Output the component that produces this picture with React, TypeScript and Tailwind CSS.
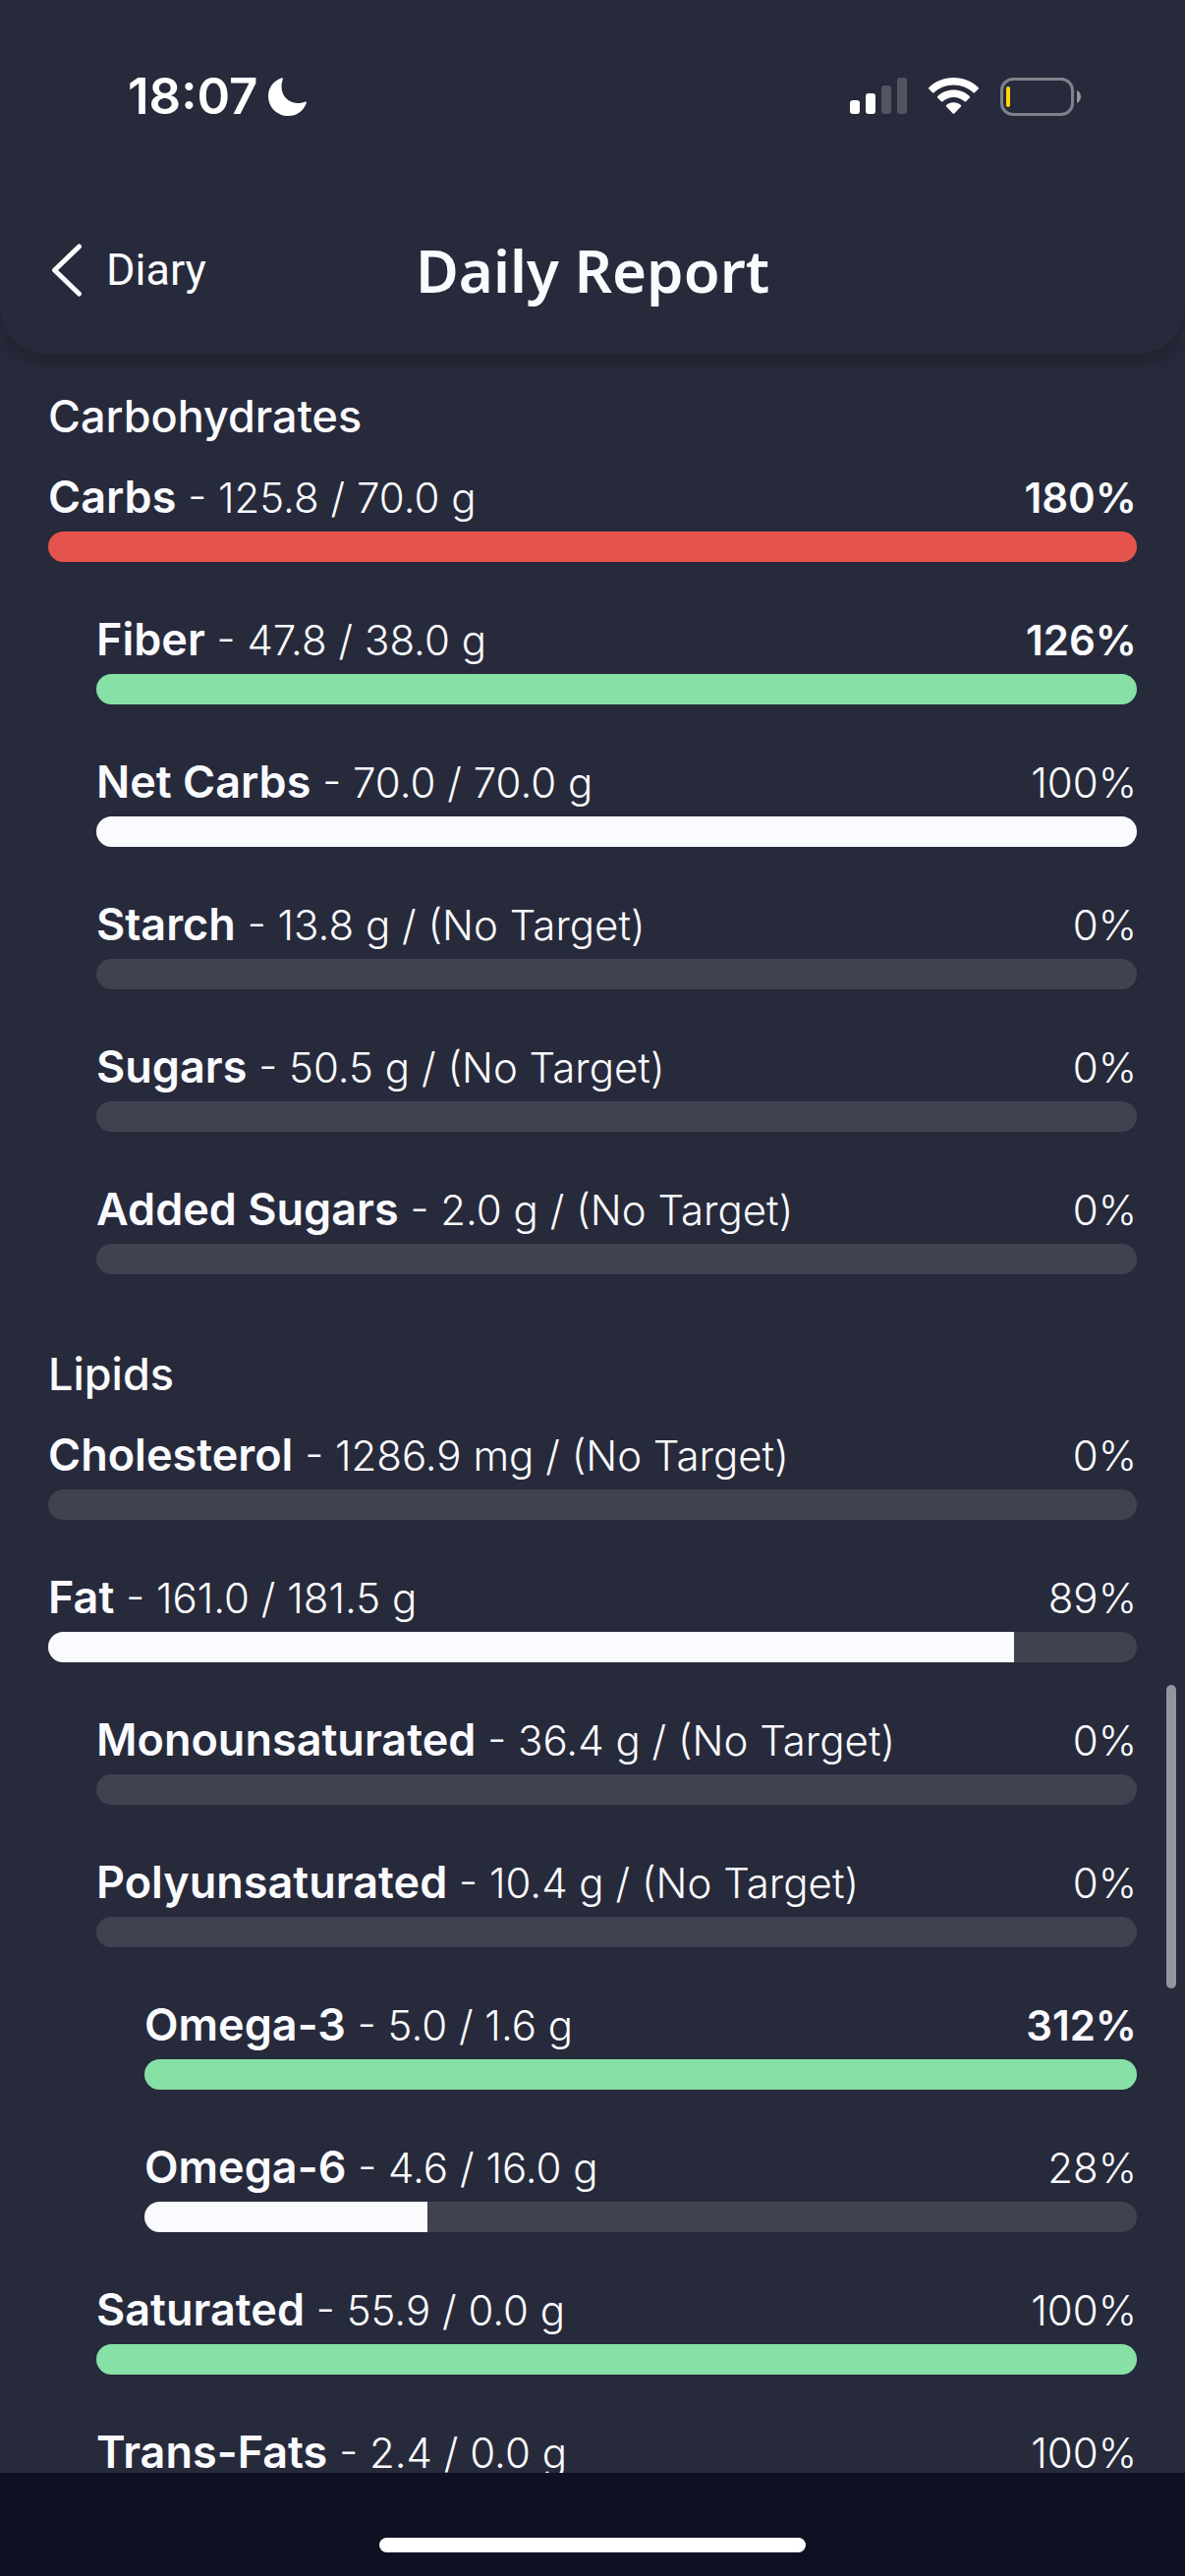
type Tone = 'white' | 'green' | 'red';

type Nutrient = {
  name: string;
  amount: string;
  percent: number;
  fill: number;
  tone: Tone;
  level: 0 | 1 | 2;
};

const toneClass: Record<Tone, string> = {
  white: 'bg-[#fafbff]',
  green: 'bg-[#87e0a5]',
  red: 'bg-[#e5544c]',
};

const levelClass = ['ml-0', 'ml-[49px]', 'ml-[98px]'];

const sections: { title: string; items: Nutrient[] }[] = [
  {
    title: 'Carbohydrates',
    items: [
      { name: 'Carbs', amount: '125.8 / 70.0 g', percent: 180, fill: 100, tone: 'red', level: 0 },
      { name: 'Fiber', amount: '47.8 / 38.0 g', percent: 126, fill: 100, tone: 'green', level: 1 },
      { name: 'Net Carbs', amount: '70.0 / 70.0 g', percent: 100, fill: 100, tone: 'white', level: 1 },
      { name: 'Starch', amount: '13.8 g / (No Target)', percent: 0, fill: 0, tone: 'white', level: 1 },
      { name: 'Sugars', amount: '50.5 g / (No Target)', percent: 0, fill: 0, tone: 'white', level: 1 },
      { name: 'Added Sugars', amount: '2.0 g / (No Target)', percent: 0, fill: 0, tone: 'white', level: 1 },
    ],
  },
  {
    title: 'Lipids',
    items: [
      { name: 'Cholesterol', amount: '1286.9 mg / (No Target)', percent: 0, fill: 0, tone: 'white', level: 0 },
      { name: 'Fat', amount: '161.0 / 181.5 g', percent: 89, fill: 88.7, tone: 'white', level: 0 },
      { name: 'Monounsaturated', amount: '36.4 g / (No Target)', percent: 0, fill: 0, tone: 'white', level: 1 },
      { name: 'Polyunsaturated', amount: '10.4 g / (No Target)', percent: 0, fill: 0, tone: 'white', level: 1 },
      { name: 'Omega-3', amount: '5.0 / 1.6 g', percent: 312, fill: 100, tone: 'green', level: 2 },
      { name: 'Omega-6', amount: '4.6 / 16.0 g', percent: 28, fill: 28.5, tone: 'white', level: 2 },
      { name: 'Saturated', amount: '55.9 / 0.0 g', percent: 100, fill: 100, tone: 'green', level: 1 },
      { name: 'Trans-Fats', amount: '2.4 / 0.0 g', percent: 100, fill: 100, tone: 'red', level: 1 },
    ],
  },
];

function StatusBar() {
  return (
    <div className="flex items-center justify-between pt-[68px] pr-[106px] pl-[130px]">
      <div className="flex items-center gap-[10px]">
        <span className="text-[51px] leading-[60px] font-semibold text-white">18:07</span>
        <svg width="39" height="39" viewBox="0 0 39 39" fill="white" aria-hidden="true">
          <path d="M13.2 0.4C14.3 0 15.2 0.7 14.8 1.9C13.9 4.3 13.4 6.8 13.5 9.6C13.7 18.9 20.3 25.8 29.6 25.9C32.2 26 34.8 25.6 37.1 24.7C38.3 24.3 39.1 25.1 38.7 26.2C35.8 33.900 28.900 39 20.500 39C9 39 0 30 0 18.700C0 10.300 5.300 3.300 13.200 0.400Z" />
        </svg>
      </div>
      <div className="flex items-center">
        <svg width="58" height="38" viewBox="0 0 58 38" aria-hidden="true">
          <rect x="0" y="23" width="10" height="14" rx="3" fill="white" />
          <rect x="16" y="16" width="10" height="21" rx="3" fill="white" />
          <rect x="32" y="8" width="10" height="29" rx="3" fill="#525462" />
          <rect x="48" y="0" width="10" height="37" rx="3" fill="#525462" />
        </svg>
        <svg className="ml-[22px]" width="51" height="38" viewBox="0 0 51 38" fill="white" aria-hidden="true">
          <path d="M25.500 0C35.300 0 44.200 3.800 50.600 9.900C51.100 10.400 51.100 11 50.700 11.500L47 15.200C46.500 15.700 45.900 15.700 45.400 15.200C40.200 10.300 33.200 7.400 25.500 7.400C17.800 7.400 10.800 10.300 5.600 15.200C5.100 15.700 4.500 15.700 4 15.200L0.300 11.500C-0.100 11-0.100 10.400 0.400 9.900C6.800 3.800 15.700 0 25.500 0Z" />
          <path d="M25.500 12.600C31.800 12.600 37.500 15 41.800 18.900C42.300 19.400 42.300 20 41.800 20.500L38.100 24.200C37.600 24.700 37 24.700 36.500 24.300C33.600 21.700 29.700 20.100 25.500 20.100C21.300 20.100 17.400 21.700 14.500 24.300C14 24.700 13.400 24.700 12.900 24.200L9.200 20.500C8.700 20 8.700 19.400 9.200 18.900C13.500 15 19.200 12.600 25.500 12.600Z" />
          <path d="M25.500 25.200C28.300 25.200 30.900 26.200 32.900 27.900C33.400 28.300 33.400 28.900 32.900 29.400L26.300 36.400C25.800 36.900 25.200 36.900 24.700 36.400L18.100 29.400C17.600 28.900 17.600 28.300 18.100 27.900C20.100 26.200 22.700 25.200 25.500 25.200Z" />
        </svg>
        <svg className="ml-[22px]" width="82" height="39" viewBox="0 0 82 39" aria-hidden="true">
          <rect x="1.500" y="1.500" width="72" height="36" rx="11.500" fill="none" stroke="#7f818b" strokeWidth="3" />
          <rect x="6" y="9" width="4" height="21" rx="2" fill="#ffd60a" />
          <path d="M78 13C80.400 14 82 16.500 82 19.500C82 22.500 80.400 25 78 26Z" fill="#9495a0" />
        </svg>
      </div>
    </div>
  );
}

function Header() {
  return (
    <header className="relative z-10 rounded-b-[48px] bg-[#272a3b] pb-[44px] shadow-[0_12px_8px_rgba(30,31,42,0.5)]">
      <StatusBar />
      <div className="mt-[106px] grid grid-cols-[1fr_auto_1fr] items-center px-[52px]">
        <button type="button" className="flex items-center gap-6 justify-self-start font-['Roboto',sans-serif] text-[45px] leading-[60px]">
          <svg width="32" height="54" viewBox="0 0 32 54" fill="none" stroke="currentColor" strokeWidth="5" strokeLinecap="round" strokeLinejoin="round" aria-hidden="true">
            <path d="M28.500 3L3.500 27L28.500 51" />
          </svg>
          Diary
        </button>
        <h1 className="font-['Noto_Sans',sans-serif] text-[60px] leading-[82px] font-semibold">Daily Report</h1>
      </div>
    </header>
  );
}

function NutrientRow({ item }: { item: Nutrient }) {
  const strong = item.percent > 100;
  return (
    <li className={levelClass[item.level]}>
      <div className="flex items-baseline justify-between text-[42px] leading-[56px] font-light">
        <p>
          <span className="text-[45px] font-semibold">{item.name}</span> - {item.amount}
        </p>
        <span className={strong ? 'font-semibold' : ''}>{item.percent}%</span>
      </div>
      <div
        role="progressbar"
        aria-label={item.name}
        aria-valuenow={item.percent}
        className="mt-[6px] h-[31px] overflow-hidden rounded-full bg-[#414250]"
      >
        <div className={`h-full ${toneClass[item.tone]}`} style={{ width: `${item.fill}%` }} />
      </div>
    </li>
  );
}

export default function App() {
  return (
    <div className="flex h-screen flex-col bg-[#272a3b] font-['Inter',sans-serif] text-[#fafbff]">
      <Header />
      <main className="relative min-h-0 flex-1 overflow-hidden px-[49px] pt-[34px]">
        {sections.map((section) => (
          <section key={section.title} className="mb-[72px]">
            <h2 className="text-[45px] leading-[60px] font-medium">{section.title}</h2>
            <ul className="mt-6 flex flex-col gap-[51px]">
              {section.items.map((item) => (
                <NutrientRow key={item.name} item={item} />
              ))}
            </ul>
          </section>
        ))}
        <div className="absolute top-[1355px] right-[9px] h-[309px] w-[10px] rounded-full bg-[#93959e]" />
      </main>
      <footer className="flex justify-center bg-[#0f1021] pt-[66px] pb-6">
        <div className="h-[15px] w-[36%] rounded-full bg-white" />
      </footer>
    </div>
  );
}
